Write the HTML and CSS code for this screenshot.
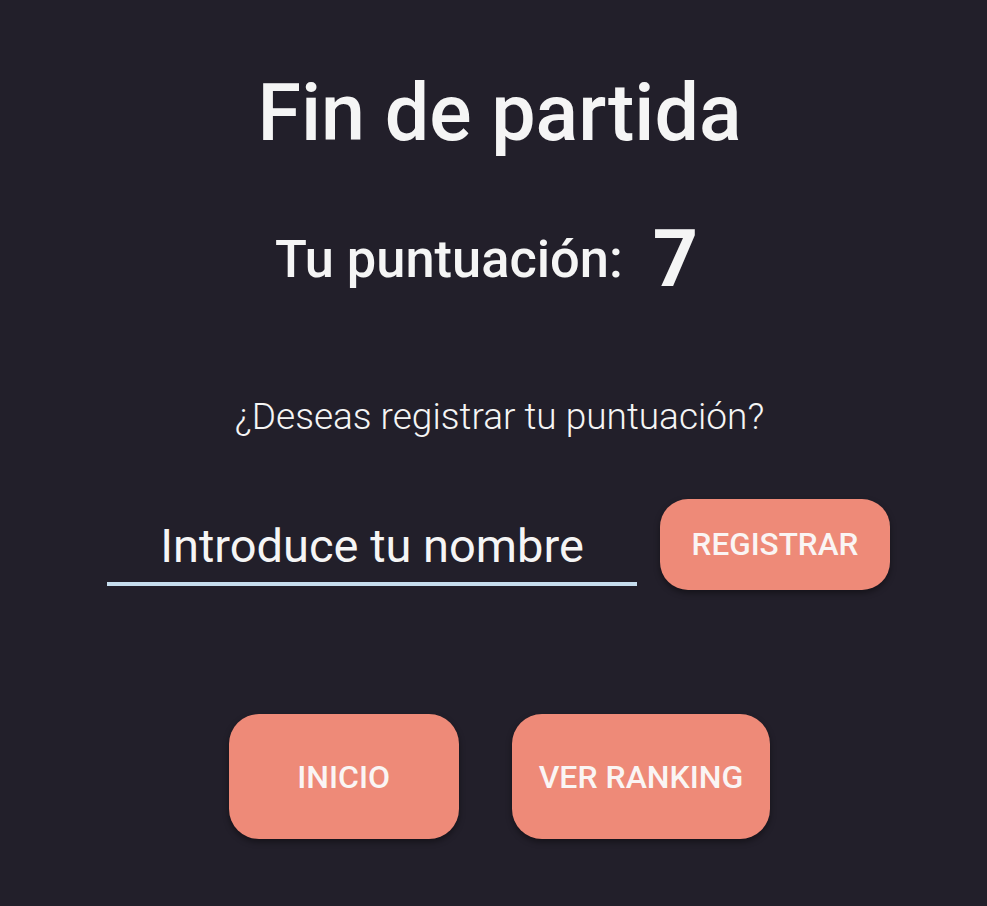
FILE: index.html
```html
<!DOCTYPE html>
<html lang="es">
<head>
<meta charset="utf-8">
<title>Fin de partida</title>
<link rel="stylesheet" href="styles.css">
</head>
<body>
<main class="screen">
  <h1 class="title">Fin de partida</h1>
  <div class="score-row">
    <span class="score-label">Tu puntuación:</span>
    <span class="score-value">7</span>
  </div>
  <p class="question">¿Deseas registrar tu puntuación?</p>
  <div class="register-row">
    <input class="name-input" type="text" placeholder="Introduce tu nombre">
    <button class="btn btn-register">REGISTRAR</button>
  </div>
  <div class="actions">
    <button class="btn btn-big">INICIO</button>
    <button class="btn btn-big">VER RANKING</button>
  </div>
</main>
</body>
</html>
```
FILE: styles.css
```css
html, body {
  margin: 0;
  padding: 0;
  background: #221f2a;
  height: 100%;
}
body {
  font-family: Roboto, "Noto Sans", sans-serif;
  color: #f5f5f5;
}
.screen {
  display: flex;
  flex-direction: column;
  align-items: center;
  padding: 74px 0 0 12px;
  box-sizing: border-box;
  min-height: 100%;
}
.title {
  margin: 0;
  font-size: 79px;
  font-weight: 500;
  line-height: 78px;
  color: #f5f5f5;
}
.score-row {
  display: flex;
  align-items: center;
  margin-top: 68px;
  padding-right: 26px;
  gap: 30px;
}
.score-label {
  font-size: 52.4px;
  font-weight: 500;
  line-height: 60px;
}
.score-value {
  font-size: 79px;
  font-weight: 700;
  line-height: 78px;
}
.question {
  margin: 98px 0 0 0;
  font-size: 37px;
  font-weight: 300;
  line-height: 42px;
}
.register-row {
  display: flex;
  align-items: center;
  gap: 23px;
  margin-top: 61px;
  margin-left: -2px;
}
.name-input {
  width: 530px;
  box-sizing: border-box;
  background: transparent;
  border: none;
  border-bottom: 4px solid #c6ddee;
  color: #f5f5f5;
  font-family: Roboto, "Noto Sans", sans-serif;
  font-size: 47px;
  font-weight: 400;
  text-align: center;
  padding: 4px 0 9px;
  margin-top: 10px;
  outline: none;
}
.name-input::placeholder {
  color: #f5f5f5;
  opacity: 1;
}
.btn {
  font-family: Roboto, "Noto Sans", sans-serif;
  font-weight: 500;
  color: #faf5f4;
  background: #ee8a78;
  border: none;
  border-radius: 28px;
  box-shadow: 0 3px 6px rgba(0, 0, 0, 0.4);
  min-width: 230px;
  padding: 0 27px;
}
.btn-register {
  height: 91px;
  font-size: 31.5px;
}
.actions {
  display: flex;
  gap: 53px;
  margin-top: 124px;
}
.btn-big {
  height: 125px;
  font-size: 32px;
  border-radius: 30px;
}
```
